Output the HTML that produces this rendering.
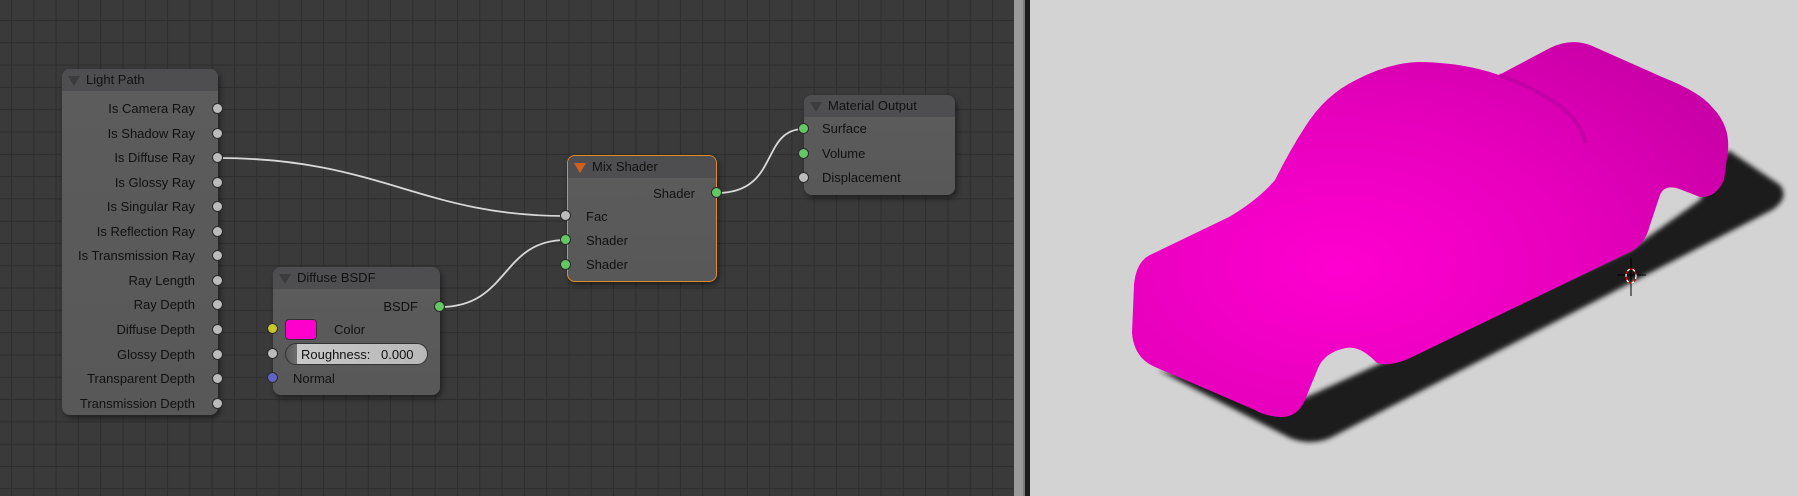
<!DOCTYPE html>
<html><head><meta charset="utf-8"><style>
*{margin:0;padding:0;box-sizing:border-box}
body{width:1798px;height:496px;overflow:hidden;position:relative;background:#393939;font-family:"Liberation Sans","DejaVu Sans",sans-serif;font-size:13px;color:#111}
#grid{position:absolute;left:0;top:0;width:1014px;height:496px;
background-color:#3a3a3a;
background-image:linear-gradient(to right,#2e2e2e 1px,transparent 1px),linear-gradient(to bottom,#2e2e2e 1px,transparent 1px);
background-size:22.3px 22.3px;background-position:11px 20px}
.node{position:absolute;border-radius:8px;background:linear-gradient(to bottom,#5c5c5c,#585858);box-shadow:2px 3px 6px rgba(0,0,0,.45)}
.hdr{height:22px;background:#4e4e50;border-radius:8px 8px 0 0;position:relative;line-height:22px;padding-left:24px;color:#111}
.tri{position:absolute;left:6px;top:7px;width:0;height:0;border-left:6px solid transparent;border-right:6px solid transparent;border-top:10px solid #3c3c3c}
.row{position:absolute;white-space:nowrap}
.r{text-align:right}
.sock{position:absolute;width:11px;height:11px;border-radius:50%;border:1px solid #2a2a2a}
.g{background:#bbb}.gr{background:#63c763}.y{background:#c7c729}.b{background:#6363c7}
#vp{position:absolute;left:1030px;top:0;width:768px;height:496px;background:#d3d3d3}
</style></head><body>
<div id="grid"></div>
<div style="position:absolute;left:1014px;top:0;width:9px;height:496px;background:#9a9a9a"></div>
<div style="position:absolute;left:1023px;top:0;width:2px;height:496px;background:#7a7a7a"></div>
<div style="position:absolute;left:1025px;top:0;width:5px;height:496px;background:#1c1c1c"></div>
<div id="vp"></div>

<svg style="position:absolute;left:0;top:0" width="1798" height="496">
<g fill="none" stroke="#d8d8d8" stroke-width="1.8">
<path d="M218 158 C380 158,420 216,566 216"/>
<path d="M440 307 C510 307,500 240,566 240"/>
<path d="M717 193 C780 193,760 129,804 129"/>
</g>
<defs>
<radialGradient id="pk" cx="0.35" cy="0.6" r="0.75">
<stop offset="0" stop-color="#ff00d0"/><stop offset="0.55" stop-color="#e600bc"/><stop offset="1" stop-color="#c800a6"/>
</radialGradient>
<filter id="bl"><feGaussianBlur stdDeviation="2.5"/></filter>
</defs>
<path filter="url(#bl)" fill="#1c1c1c" d="M1158 370 L1290 438 Q1310 446 1330 438 L1772 210 Q1790 198 1780 185 L1728 150 L1700 200 L1630 250 L1300 400 Z"/>
<path fill="url(#pk)" d="M1132 333 L1134 285 Q1136 262 1150 255 L1229 217 Q1258 200 1275 180 Q1290 150 1305 127 Q1325 95 1356 80 Q1390 62 1422 62 Q1465 63 1499 75 L1550 48 Q1570 38 1590 45 L1662 77 Q1700 92 1712 107 Q1730 125 1728 150 L1724 180 Q1716 198 1700 197 L1682 190 Q1665 183 1660 195 L1650 225 Q1645 245 1630 252 L1410 358 Q1390 367 1377 363 Q1360 345 1346 348 Q1325 352 1318 368 L1305 400 Q1297 418 1280 417 Q1265 416 1255 410 L1155 367 Q1134 358 1132 333 Z"/>
<path fill="none" stroke="#a80098" stroke-width="4" opacity=".45" d="M1499 75 Q1580 105 1585 143"/>
<g stroke="#000" stroke-width="1"><line x1="1617" y1="275" x2="1646" y2="275"/><line x1="1631" y1="258" x2="1631" y2="296"/></g>
<ellipse cx="1631" cy="276" rx="5" ry="7" fill="none" stroke="#fff" stroke-width="1.3" stroke-dasharray="3 3"/>
<ellipse cx="1631" cy="276" rx="5" ry="7" fill="none" stroke="#d00" stroke-width="1.3" stroke-dasharray="3 3" stroke-dashoffset="3"/>
</svg>

<!-- Light Path -->
<div class="node" style="left:62px;top:69px;width:156px;height:346px">
<div class="hdr"><span class="tri"></span>Light Path</div>
</div>
<div style="position:absolute;left:62px;top:0;width:133px">
<div class="row r" style="top:101px;width:133px">Is Camera Ray</div>
<div class="row r" style="top:126px;width:133px">Is Shadow Ray</div>
<div class="row r" style="top:150px;width:133px">Is Diffuse Ray</div>
<div class="row r" style="top:175px;width:133px">Is Glossy Ray</div>
<div class="row r" style="top:199px;width:133px">Is Singular Ray</div>
<div class="row r" style="top:224px;width:133px">Is Reflection Ray</div>
<div class="row r" style="top:248px;width:133px">Is Transmission Ray</div>
<div class="row r" style="top:273px;width:133px">Ray Length</div>
<div class="row r" style="top:297px;width:133px">Ray Depth</div>
<div class="row r" style="top:322px;width:133px">Diffuse Depth</div>
<div class="row r" style="top:347px;width:133px">Glossy Depth</div>
<div class="row r" style="top:371px;width:133px">Transparent Depth</div>
<div class="row r" style="top:396px;width:133px">Transmission Depth</div>
</div>
<div class="sock g" style="left:212px;top:103px"></div>
<div class="sock g" style="left:212px;top:128px"></div>
<div class="sock g" style="left:212px;top:152px"></div>
<div class="sock g" style="left:212px;top:177px"></div>
<div class="sock g" style="left:212px;top:201px"></div>
<div class="sock g" style="left:212px;top:226px"></div>
<div class="sock g" style="left:212px;top:250px"></div>
<div class="sock g" style="left:212px;top:275px"></div>
<div class="sock g" style="left:212px;top:299px"></div>
<div class="sock g" style="left:212px;top:324px"></div>
<div class="sock g" style="left:212px;top:349px"></div>
<div class="sock g" style="left:212px;top:373px"></div>
<div class="sock g" style="left:212px;top:398px"></div>

<!-- Diffuse BSDF -->
<div class="node" style="left:273px;top:267px;width:167px;height:128px">
<div class="hdr"><span class="tri"></span>Diffuse BSDF</div>
<div class="row" style="right:22px;top:32px">BSDF</div>
<div style="position:absolute;left:12px;top:52px;width:32px;height:21px;background:#ff00cc;border:1px solid #333;border-radius:4px"></div>
<div class="row" style="left:61px;top:55px">Color</div>
<div style="position:absolute;left:12px;top:76px;width:143px;height:22px;border-radius:11px;border:1px solid #333;background:linear-gradient(to right,#5a5a5a 0,#6e6e6e 11px,#c8c8c8 11px,#b8b8b8);"></div>
<div class="row" style="left:28px;top:80px">Roughness:</div>
<div class="row" style="left:108px;top:80px">0.000</div>
<div class="row" style="left:20px;top:104px">Normal</div>
</div>
<div class="sock gr" style="left:434px;top:301px"></div>
<div class="sock y" style="left:267px;top:323px"></div>
<div class="sock g" style="left:267px;top:348px"></div>
<div class="sock b" style="left:267px;top:372px"></div>

<!-- Mix Shader -->
<div class="node" style="left:567px;top:155px;width:150px;height:127px;border:1px solid #e38a2a">
<div class="hdr" style="border-radius:7px 7px 0 0"><span class="tri" style="border-top-color:#d2601c"></span>Mix Shader</div>
<div class="row" style="right:21px;top:30px">Shader</div>
<div class="row" style="left:18px;top:53px">Fac</div>
<div class="row" style="left:18px;top:77px">Shader</div>
<div class="row" style="left:18px;top:101px">Shader</div>
</div>
<div class="sock gr" style="left:711px;top:187px"></div>
<div class="sock g" style="left:560px;top:210px"></div>
<div class="sock gr" style="left:560px;top:234px"></div>
<div class="sock gr" style="left:560px;top:259px"></div>

<!-- Material Output -->
<div class="node" style="left:804px;top:95px;width:151px;height:100px">
<div class="hdr"><span class="tri"></span>Material Output</div>
<div class="row" style="left:18px;top:26px">Surface</div>
<div class="row" style="left:18px;top:51px">Volume</div>
<div class="row" style="left:18px;top:75px">Displacement</div>
</div>
<div class="sock gr" style="left:798px;top:123px"></div>
<div class="sock gr" style="left:798px;top:148px"></div>
<div class="sock g" style="left:798px;top:172px"></div>
</body></html>
